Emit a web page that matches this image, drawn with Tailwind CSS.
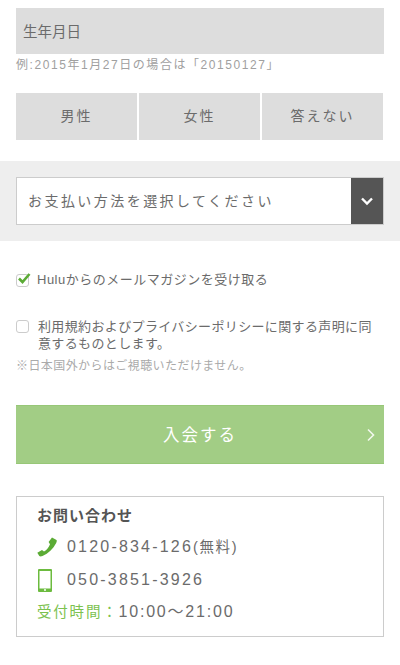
<!DOCTYPE html>
<html lang="ja">
<head>
    <meta charset="UTF-8">
    <meta name="viewport" content="width=device-width, initial-scale=1.0">
    <title>入会</title>
    <script src="https://cdn.jsdelivr.net/npm/@tailwindcss/browser@4"></script>
</head>
<body class="bg-white font-['Liberation_Sans','Noto_Sans_CJK_JP',sans-serif] text-[#6b6b6b] overflow-hidden">
    <div class="w-[400px] h-[665px] pt-2">
        <!-- 生年月日 -->
        <div class="mx-4">
            <div class="h-[46px] pt-[3px] bg-[#dddddd] flex items-center px-[7px] text-[14.5px] text-[#6b6b6b]">生年月日</div>
            <p class="h-[22px] leading-[23px] text-[12px] tracking-[1.56px] text-[#a0a0a0]">例:2015年1月27日の場合は「20150127」</p>
        </div>

        <!-- 性別 -->
        <div class="mx-4 mt-[17px] w-[367px] grid grid-cols-3 gap-[2px] h-[47px] text-[14px] tracking-[2px] text-[#6b6b6b]">
            <div class="bg-[#dddddd] flex items-center justify-center">男性</div>
            <div class="bg-[#dddddd] flex items-center justify-center">女性</div>
            <div class="bg-[#dddddd] flex items-center justify-center">答えない</div>
        </div>

        <!-- 支払い方法 -->
        <div class="mt-[21px] h-[80px] bg-[#eeeeee] px-4 pt-4">
            <div class="h-[48px] w-[368px] bg-white border border-[#cccccc] flex items-stretch">
                <div class="flex-1 flex items-center pl-[11px] text-[14px] tracking-[2.45px] text-[#6b6b6b]">お支払い方法を選択してください</div>
                <div class="w-[32px] bg-[#555555] flex items-center justify-center">
                    <svg width="14" height="10" viewBox="0 0 14 10"><path d="M2 2.5 L7 7.5 L12 2.5" fill="none" stroke="#fff" stroke-width="2.4"/></svg>
                </div>
            </div>
        </div>

        <!-- チェックボックス -->
        <div class="mx-4 mt-[29px] flex items-center h-5 text-[13px] tracking-[0.5px] text-[#6b6b6b]">
            <div class="relative w-[13px] h-[13px] border border-[#ccc] rounded-[3px] bg-white shrink-0">
                <svg class="absolute -top-[3px] left-0" width="15" height="13" viewBox="0 0 15 13"><path d="M2 6.5 L5.5 10 L12.5 2" fill="none" stroke="#5bab35" stroke-width="2.6"/></svg>
            </div>
            <span class="ml-2">Huluからのメールマガジンを受け取る</span>
        </div>
        <div class="mx-4 mt-[28px] flex items-start text-[13px] leading-[17px] tracking-[0.36px] text-[#6b6b6b]">
            <div class="w-[13px] h-[13px] mt-[2px] border border-[#ccc] rounded-[3px] bg-white shrink-0"></div>
            <span class="ml-[9px] w-[340px]">利用規約およびプライバシーポリシーに関する声明に同<br>意するものとします。</span>
        </div>
        <p class="mx-4 mt-[5px] text-[12px] leading-[18px] tracking-[0.42px] text-[#aaa]">※日本国外からはご視聴いただけません。</p>

        <!-- 入会ボタン -->
        <div class="mx-4 mt-[30px] relative h-[59px] pt-[2px] bg-[#a2cd85] border-y border-[#97c777] flex items-center justify-center text-white text-[16.5px] tracking-[2px]">
            入会する
            <svg class="absolute right-[8px] top-[22px]" width="10" height="14" viewBox="0 0 10 14"><path d="M2 1.5 L7.5 7 L2 12.5" fill="none" stroke="#fff" stroke-opacity="0.85" stroke-width="1.6"/></svg>
        </div>

        <!-- お問い合わせ -->
        <div class="mx-4 mt-8 h-[141px] border border-[#cccccc] pl-5 pt-[9px] text-[#6b6b6b]">
            <p class="text-[15px] font-bold leading-5 tracking-[1px] text-[#555]">お問い合わせ</p>
            <div class="mt-[9px] flex items-center h-[24px]">
                <svg class="w-5 h-5 shrink-0" viewBox="0 0 20 20"><path d="M15 0.5 L19.5 3 C20 3.6 19.8 4.8 19.2 6 C16 12 11.5 16.5 5.5 19 C4 19.6 3 19.5 2.3 19 L0.3 15.8 L5 13 L7 14.6 C9.8 12.8 11.8 10.2 13 7.2 L11.6 5 Z" fill="#5bab35"/></svg>
                <span class="ml-[10px] text-[16px] tracking-[2.2px]">0120-834-126<span class="text-[14.5px] tracking-[1.6px]">(無料)</span></span>
            </div>
            <div class="mt-[9px] flex items-center h-[24px]">
                <svg class="ml-[1px] w-[14px] h-[23px] shrink-0" viewBox="0 0 14 23"><path fill-rule="evenodd" d="M1 0 H13 A1 1 0 0 1 14 1 V22 A1 1 0 0 1 13 23 H1 A1 1 0 0 1 0 22 V1 A1 1 0 0 1 1 0 Z M1.5 2 V19.5 H12.5 V2 Z M7 20 A1 1 0 1 0 7 22 A1 1 0 1 0 7 20 Z" fill="#6cbb3f"/></svg>
                <span class="ml-[15px] text-[16px] tracking-[2.2px]">050-3851-3926</span>
            </div>
            <p class="mt-[8px] text-[16px] leading-6 tracking-[1.8px]"><span class="text-[#7cc24f] text-[14.5px] tracking-[1.8px]">受付時間：</span>10:00～21:00</p>
        </div>
    </div>
</body>
</html>
